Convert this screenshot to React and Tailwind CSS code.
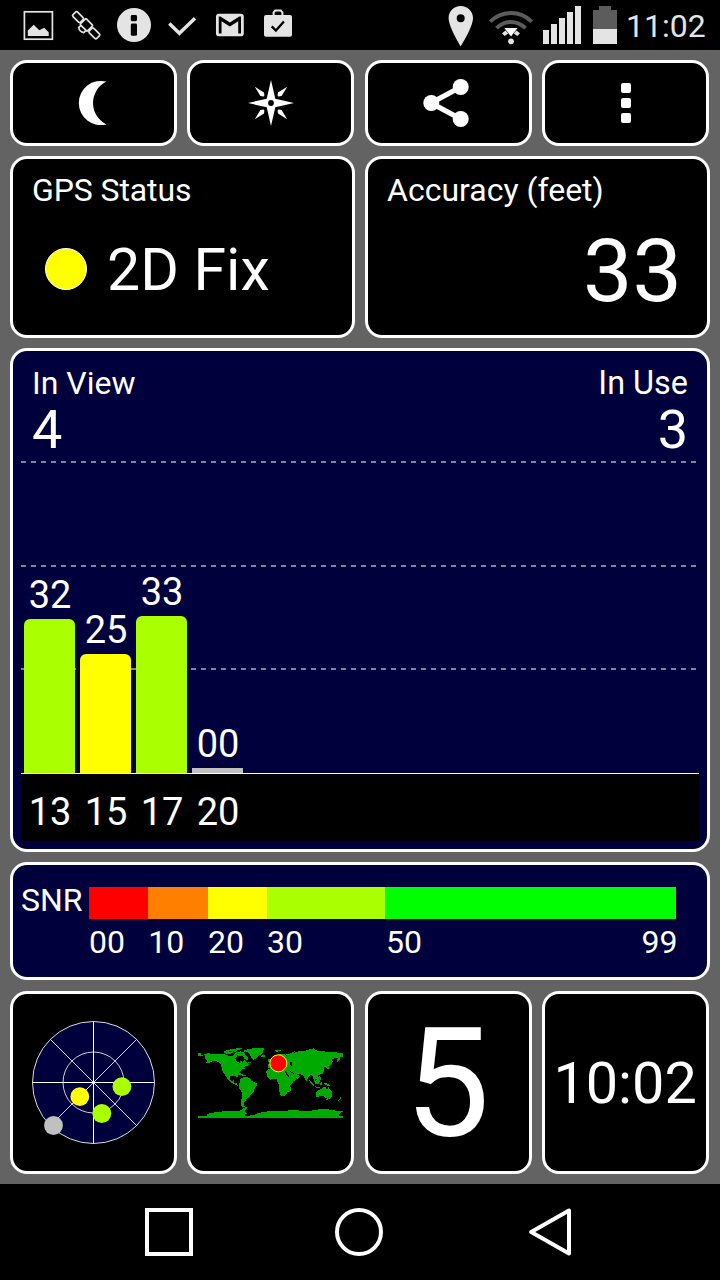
import React from "react";

const satellites = [
  { id: "13", snr: "32", height: 154, color: "bg-[#aaff00]" },
  { id: "15", snr: "25", height: 119, color: "bg-[#ffff00]" },
  { id: "17", snr: "33", height: 157, color: "bg-[#aaff00]" },
  { id: "20", snr: "00", height: 5, color: "bg-[#c0c0c0]" },
];

const snrBands = [
  { label: "00", width: "w-[59.3px]", color: "bg-[#ff0000]" },
  { label: "10", width: "w-[59.7px]", color: "bg-[#ff8000]" },
  { label: "20", width: "w-[59px]", color: "bg-[#ffff00]" },
  { label: "30", width: "w-[118px]", color: "bg-[#aaff00]" },
  { label: "50", width: "w-[291.5px]", color: "bg-[#00ff00]" },
];

function Card({ className = "", children }) {
  return (
    <div className={`rounded-[17px] border-[3px] border-white ${className}`}>
      {children}
    </div>
  );
}

function StatusIcon({ children }) {
  return (
    <svg width="48" height="50" viewBox="0 0 48 50" fill="none">
      {children}
    </svg>
  );
}

function StatusBar() {
  return (
    <div className="flex h-[50px] items-center justify-between bg-black pl-[14px]">
      <div className="flex">
        <StatusIcon>
          <rect x="10.4" y="11.8" width="28" height="27.4" stroke="#e4e4e4" strokeWidth="1.7" />
          <path d="M13.8 36v-5.4l5.9-5.8 5.6 5.4 4.9-2.4 4.5 4.4V36z" fill="#e4e4e4" />
        </StatusIcon>
        <StatusIcon>
          <g transform="translate(24.2 25.2) rotate(45)" stroke="#e4e4e4" strokeWidth="1.7">
            <rect x="-16.8" y="-3.2" width="10.6" height="6.4" rx="1.4" />
            <rect x="-5" y="-4.6" width="10" height="8.4" rx="1" />
            <rect x="6.2" y="-3.2" width="10.6" height="6.4" rx="1.4" />
            <path d="M-6.2 0h1.2M5 0h1.2M-3.6 3.8v3.2q3.6 2.4 7.2 0V3.8" />
          </g>
        </StatusIcon>
        <StatusIcon>
          <circle cx="24" cy="25" r="17" fill="#e4e4e4" />
          <rect x="20.8" y="15" width="6.2" height="6.2" rx="1.4" fill="#000" />
          <rect x="20.8" y="23.6" width="6.2" height="12.2" rx="1.4" fill="#000" />
        </StatusIcon>
        <StatusIcon>
          <path d="M11.3 23.6l10.1 9.7L37 18.2" stroke="#e4e4e4" strokeWidth="3.4" />
        </StatusIcon>
        <StatusIcon>
          <path
            transform="translate(7.2 8.1) scale(1.39 1.41)"
            d="M20 18h-2V9.25L12 13 6 9.25V18H4V6h1.2l6.8 4.25L18.8 6H20m0-2H4c-1.11 0-2 .89-2 2v12a2 2 0 002 2h16a2 2 0 002-2V6a2 2 0 00-2-2z"
            fill="#e4e4e4"
          />
        </StatusIcon>
        <StatusIcon>
          <rect x="10" y="14.9" width="28" height="21.8" rx="2" fill="#e4e4e4" />
          <path d="M19.6 15v-2.6l1.6-1.8h5.6l1.6 1.8V15" stroke="#e4e4e4" strokeWidth="2" />
          <path d="M17.7 26.4l4.2 4.2 8-9" stroke="#000" strokeWidth="2.3" />
        </StatusIcon>
      </div>
      <div className="flex items-center pr-[14px]">
        <svg width="179" height="50" viewBox="0 0 179 50" fill="none">
          <path
            fillRule="evenodd"
            d="M12.7 6C5.9 6 .6 11.2.6 18c0 9 12.1 28.4 12.1 28.4S25 27 25 18C25 11.2 19.5 6 12.7 6zm0 16.2a4 4 0 110-8 4 4 0 010 8z"
            fill="#e4e4e4"
          />
          <path d="M42.3 21.6c11.8-11.4 29.6-11.4 41.4 0" stroke="#5c5c5c" strokeWidth="4" />
          <path d="M48.5 28.1c8.4-8.3 20.6-8.3 29 0" stroke="#5c5c5c" strokeWidth="4" />
          <path d="M56.4 28h13.2L63 36.5z" fill="#fff" />
          <path d="M54 33.2l3.6-2.8 2.6 3-3.6 2.6zM72 33.2l-3.6-2.8-2.6 3 3.6 2.6z" fill="#e4e4e4" />
          <circle cx="63" cy="41.3" r="2.9" fill="#e4e4e4" />
          <path d="M95 30h6v14h-6zM103 24h6v20h-6zM111 18h6v26h-6zM119 12h6v32h-6zM127 6h6v38h-6z" fill="#e4e4e4" />
          <path d="M145 10h6V6h12v4h6v19h-24z" fill="#5c5c5c" />
          <path d="M145 29h24v15h-24z" fill="#e4e4e4" />
        </svg>
        <span className="-ml-px w-[80px] pt-[2px] text-[32px] leading-[50px] text-[#e4e4e4]">11:02</span>
      </div>
    </div>
  );
}

function MoonIcon() {
  return (
    <svg width="48" height="48" viewBox="0 0 48 48">
      <path d="M37.4 2.6A22.1 22.1 0 1 0 37.4 45.4A23.8 23.8 0 0 1 37.4 2.6z" fill="#fff" />
    </svg>
  );
}

function CompassIcon() {
  return (
    <svg width="48" height="48" viewBox="-24 -24 48 48" fill="#fff">
      <path
        fillRule="evenodd"
        d="M0-23L4.3-4.3 23 0 4.3 4.3 0 23-4.3 4.3-23 0-4.3-4.3zM0-2.9a2.9 2.9 0 100 5.8 2.9 2.9 0 000-5.8z"
      />
      <path d="M-16.2-16.2l9.2 5.6.4 3.2-.8.8-3.2-.4zM16.2-16.2l-9.2 5.6-.4 3.2.8.8 3.2-.4zM-16.2 16.2l9.2-5.6.4-3.2-.8-.8-3.2.4zM16.2 16.2l-9.2-5.6-.4-3.2.8-.8 3.2.4z" />
    </svg>
  );
}

function ShareIcon() {
  return (
    <svg width="46" height="50" viewBox="-1.4 0 46 50" fill="#fff">
      <path d="M36.4 9L6.6 25l29.8 16" fill="none" stroke="#fff" strokeWidth="5.2" />
      <circle cx="36.3" cy="9" r="8" />
      <circle cx="6.9" cy="25" r="8" />
      <circle cx="36.3" cy="41" r="8" />
    </svg>
  );
}

function SkyView() {
  return (
    <svg width="126" height="126" viewBox="-63.5 -63.5 126 126">
      <circle r="61" fill="#00003c" stroke="#fff" strokeOpacity=".85" />
      <circle r="30.5" fill="none" stroke="#fff" strokeOpacity=".8" />
      <path d="M-61 0H61M0-61V61" stroke="#fff" />
      <path d="M-43-43L43 43M43-43L-43 43" stroke="#fff" strokeOpacity=".85" />
      <circle cx="-13.7" cy="14.2" r="9.4" fill="#ffff00" />
      <circle cx="28.4" cy="4.1" r="9.4" fill="#aaff00" />
      <circle cx="8.3" cy="31" r="9.4" fill="#aaff00" />
      <circle cx="-40" cy="43" r="9.4" fill="#c0c0c0" />
    </svg>
  );
}

function WorldMap() {
  return (
    <svg width="145" height="72" viewBox="38 50 435 216" shapeRendering="crispEdges">
      <g fill="#00aa00">
        <path d="M39 69h8v4h7v4h-8v-1h-7zM57 72l10-3 33 3 18 0 10 4h14l6-6 8 8-6 7 3 8 10 4 2-10 6-3 8 6 4 6 8 8-8 4-8 1 4 5-12 5-3 6-8 8 2 8-4 1-3-6-16 2-1 9 6 5 7-3-1 7 8 3 2 6 9 2-3 2-14-7-12-6-10-9-4-9-10-14-2-12-6-14-12-6-12 1-10 5-9-1 6-5-6-4z" />
        <path d="M115 64l10-5 13 1 7 6-12 5-14-2zM134 57l14-1 8-3 16-1-4 5-12 2-6 6-10-3zM148 68l8-3 10-2 9 3 8 10 7 6-4 7-9-4-4-7-14-1zM151 129h14l10 5-2 3-11-4-9 0zM172 134h9v4h-9zM189 95h7v3h-7z" />
        <path d="M175 61l10-4 17-3 22-1 15 2-7 6 2 6-6 6-10 4-7 8-7 4-7-7-3-10-8-7-10-1zM229 75l10-1 1 4-8 3-4-2z" />
        <path d="M166 144l9-4 12 1 9 5 3 6 16 8 0 7-7 6-2 12-10 7-4 9-8 4-3 8-4 4 0 8 3 5-8 2-6-7 2-13 3-25-8-10-4-10 5-11z" />
        <path d="M242 122l9-7 14-3 10 1 2 6 9 2 8-1 12 1 4 9 7 17 10-2-4 10-10 11-1 14-5 4-4 8-7 5-9 0-4-9-3-16 0-9-3-5-2-11-5-2-14 3-10-9-2-11z" />
        <path d="M247 112v-9l9-2-3-9 6-5 3 5 8-4 2-13 11-5 14 1 8 9-2-8 13-3 9-1 11-3 4-4 15 2 10-4 19-5 13 7 21 2 13 3 18-1 14 3 19 0 12 3 0 6-12 3-17 0-2 7-5 9-3-2 2-11-9 0-8 5 2 6-6 11-8 1 2 9-4 2-6-9-5 6 2 8-7 10-10 1-1 5 5 8-7 5-5-7-3 6 7 13-5-2-6-11-2-14-7-2-8 8-3 10-5-2-5-14-9-4-8-2-2 3 8 4-6 8-15 8-3-3-10-16-3-8-11-1-2-4-14 0-9 1-8-4z" />
        <path d="M270 60l17-1-3 4-12 1zM318 70l5-6 8-2-5 5 1 5zM247 88l4-4 5 5-2 6-7 1zM316 171v9l-5 6-3-4 3-8z" />
        <path d="M371 148l8 6 9 11-2 2-10-8zM390 153l8-6 6 3-4 12-8-3zM389 168l15 2-3 3-12-2zM406 155l5 2-3 8-4-2zM414 158l13 2 12 8-8 0-13-5zM401 137l5 4 2 8-4-1zM424 113l5-5 1-8 3 2-1 9-7 4z" />
        <path d="M394 182l14-7 6-5 8 1 0 6 6 0 1-7 5 7 7 10 0 10-6 8-9 1-8-6-7-4-14 4-5-2 1-10zM423 205h6v4h-6zM463 200l7 2-5 5zM458 208l5-1-4 6z" />
        <path d="M171 243l6-6 6-4 2 3-6 5-2 5zM39 258h26v-5l8-6 26-1 17-4 28 1 14-1 10-3 4-5 9-3 5 1-9 5 1 6 6 7-9 5 12 2 20-4 10-5 30-5 32 0 34-3 22 0 26 2 24-2 14-3 28 0 25 4 23 0-8 6-9 7 4 4h24v5H39z" />
      </g>
      <g fill="#000">
        <path d="M155 76l14 3 9 9-6 6-9-3-9 1-3-5 4-3zM299 122l4 2 10 17-2 2-10-13zM315 96h4l3 12-5-1-2-6zM314 122l6 4 6 1 1 3-8-1-6-5zM262 105l9 2 9 7-9-1-9-5zM289 101l10-2 6 4-11 2zM118 67h6v2h-6zM132 63h7v2h-7z" />
      </g>
      <circle cx="279" cy="99" r="25.5" fill="#ff0000" stroke="#ffff00" strokeWidth="3" shapeRendering="auto" />
    </svg>
  );
}

function SignalChart() {
  return (
    <Card className="flex h-[504px] flex-col bg-[#00003c] px-[8px] pt-[13px]">
      <div className="flex justify-between pr-[11px] pl-[11px] text-white">
        <div>
          <div className="text-[32px] leading-[38px]">In View</div>
          <div className="text-[54px] leading-[56px]">4</div>
        </div>
        <div className="text-right">
          <div className="text-[32.4px] leading-[38px]">In Use</div>
          <div className="text-[54px] leading-[56px]">3</div>
        </div>
      </div>
      <div className="relative mt-[3px] h-[312px]">
        <div className="absolute inset-0 flex flex-col justify-between pb-[103px]">
          {[0, 1, 2].map((line) => (
            <div
              key={line}
              className="h-[2px] bg-[repeating-linear-gradient(90deg,#8080a0_0_5px,transparent_5px_10px)]"
            />
          ))}
        </div>
        <div className="relative flex h-full items-end gap-[5px] pl-[3px]">
          {satellites.map((sat) => (
            <div key={sat.id} className="flex w-[51px] flex-col items-center">
              <span className="pl-px text-[38px] leading-[48px] text-white">{sat.snr}</span>
              <div
                className={`w-full ${sat.snr === "00" ? "" : "rounded-t-[6px]"} ${sat.color}`}
                style={{ height: sat.height }}
              />
            </div>
          ))}
        </div>
      </div>
      <div className="flex h-[68px] items-center gap-[5px] border-t border-white bg-black pt-[9px] pl-[3.5px]">
        {satellites.map((sat) => (
          <span key={sat.id} className="w-[51px] text-center text-[38px] leading-[48px] text-white">
            {sat.id}
          </span>
        ))}
      </div>
    </Card>
  );
}

function SnrScale() {
  return (
    <Card className="flex h-[118px] bg-[#00003c] pt-[22px] pl-[8px] text-[32px] text-white">
      <div className="w-[68px] leading-[26px]">SNR</div>
      <div className="w-[588px]">
        <div className="flex h-[32px]">
          {snrBands.map((band) => (
            <div key={band.label} className={`${band.width} ${band.color}`} />
          ))}
        </div>
        <div className="flex leading-[46px]">
          {snrBands.map((band) => (
            <div key={band.label} className={`${band.width} flex justify-between`}>
              <span className={band.label === "50" ? "pl-px" : ""}>{band.label}</span>
              {band.label === "50" && <span className="-mr-px">99</span>}
            </div>
          ))}
        </div>
      </div>
    </Card>
  );
}

export default function App() {
  return (
    <div className="flex h-[1280px] w-[720px] flex-col overflow-hidden bg-black font-['Roboto',sans-serif] text-white">
      <StatusBar />
      <div className="flex h-[1134px] flex-col gap-[10px] bg-[#636363] pt-[10px] pr-[10px] pl-[10px]">
        <div className="grid grid-cols-4 gap-[10.6px] pr-px">
          <Card className="flex h-[86px] items-center justify-center bg-black">
            <MoonIcon />
          </Card>
          <Card className="flex h-[86px] items-center justify-center bg-black">
            <CompassIcon />
          </Card>
          <Card className="flex h-[86px] items-center justify-center bg-black pr-[5px]">
            <ShareIcon />
          </Card>
          <Card className="flex h-[86px] flex-col items-center justify-center gap-[5px] bg-black">
            <div className="size-[10px] rounded-[2px] bg-white" />
            <div className="size-[10px] rounded-[2px] bg-white" />
            <div className="size-[10px] rounded-[2px] bg-white" />
          </Card>
        </div>
        <div className="grid grid-cols-2 gap-[10px]">
          <Card className="h-[182px] bg-black px-[19px] pt-[12px]">
            <div className="text-[32px] leading-[38px] tracking-[-0.1px]">GPS Status</div>
            <div className="mt-[22px] flex items-center gap-[20px] pl-[13px]">
              <div className="mb-[2px] size-[42px] rounded-full border border-white bg-[#ffff00]" />
              <span className="text-[59px] leading-[78px]">2D Fix</span>
            </div>
          </Card>
          <Card className="h-[182px] bg-black px-[19px] pt-[12px]">
            <div className="text-[32px] leading-[38px]">Accuracy (feet)</div>
            <div className="mt-[17px] pr-[6px] text-right text-[88px] leading-[90px]">33</div>
          </Card>
        </div>
        <SignalChart />
        <SnrScale />
        <div className="mt-[1px] grid grid-cols-4 gap-[10.6px] pr-px">
          <Card className="flex h-[183px] items-center justify-center bg-black pb-px">
            <SkyView />
          </Card>
          <Card className="flex h-[183px] items-center justify-center bg-black pt-px">
            <WorldMap />
          </Card>
          <Card className="flex h-[183px] items-center justify-center bg-black pt-[2px] pr-[2px] text-[152px] leading-[176px]">
            5
          </Card>
          <Card className="flex h-[183px] items-center justify-center bg-black pt-[2px] pr-px text-[57.6px] leading-[70px]">
            10:02
          </Card>
        </div>
      </div>
      <div className="flex h-[96px] items-center gap-[142px] bg-black pl-[145px]">
        <div className="size-[48px] border-4 border-white" />
        <div className="size-[48px] rounded-full border-4 border-white" />
        <svg width="48" height="48" viewBox="0 0 48 48" fill="none">
          <path d="M44 2.6v42.8L6.2 24z" stroke="#fff" strokeWidth="4" strokeLinejoin="round" />
        </svg>
      </div>
    </div>
  );
}
